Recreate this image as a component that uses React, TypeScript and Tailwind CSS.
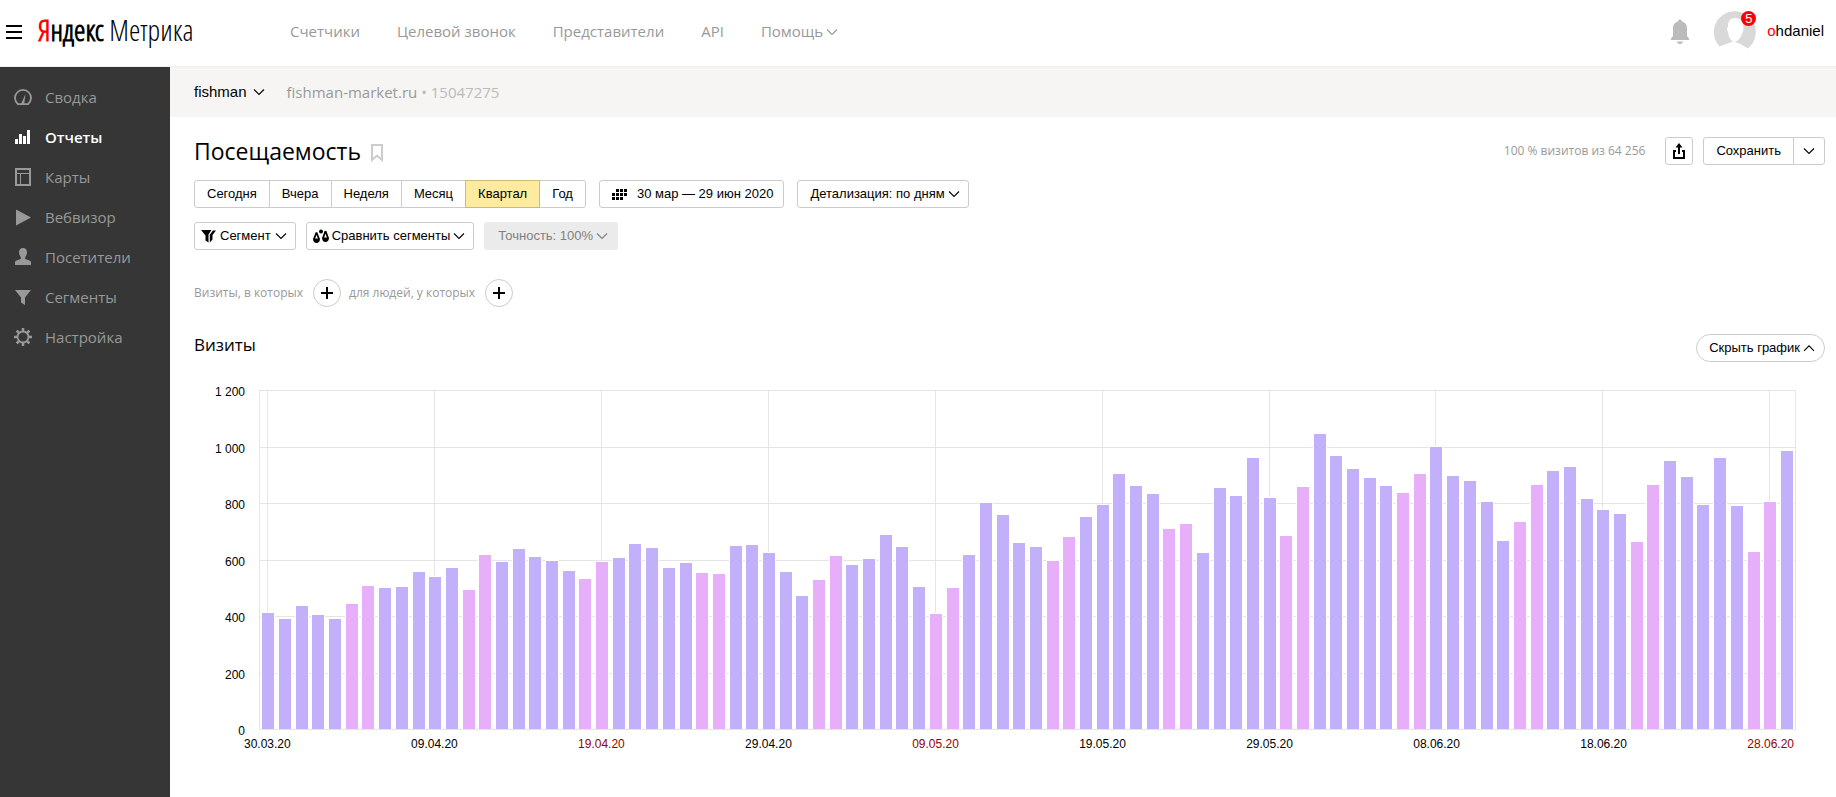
import type { ReactNode } from 'react'
import clsx from 'clsx'
import { twMerge } from 'tailwind-merge'

const menu = ['Счетчики', 'Целевой звонок', 'Представители', 'API']

const periods = ['Сегодня', 'Вчера', 'Неделя', 'Месяц', 'Квартал', 'Год']

// Visits per day, starting on Monday 30.03.20
const visits = [
  413, 392, 437, 406, 389, 445, 509, 501, 505, 559, 541, 573, 495, 619, 594, 640,
  612, 598, 562, 534, 594, 608, 658, 644, 573, 590, 555, 551, 650, 653, 625, 557,
  472, 529, 614, 582, 603, 689, 646, 504, 409, 501, 618, 802, 759, 660, 646, 596,
  681, 752, 795, 905, 862, 834, 710, 727, 625, 855, 827, 961, 820, 685, 859, 1046,
  968, 922, 890, 862, 837, 905, 1000, 898, 880, 805, 667, 735, 866, 915, 929, 816,
  777, 763, 664, 866, 951, 894, 795, 961, 791, 628, 805, 986,
]

const maxVisits = 1200

const yLabels = ['1 200', '1 000', '800', '600', '400', '200', '0']

const xLabels = [
  '30.03.20', '09.04.20', '19.04.20', '29.04.20', '09.05.20',
  '19.05.20', '29.05.20', '08.06.20', '18.06.20', '28.06.20',
]

const isWeekend = (i: number) => i % 7 > 4

function Chevron({ up = false }: { up?: boolean }) {
  return (
    <svg width="12" height="8" viewBox="0 0 12 8" className="shrink-0" fill="none" stroke="currentColor" strokeWidth="1.1">
      <path d={up ? 'M1 6.8 6 1.8l5 5' : 'M1 1.5l5 5 5-5'} />
    </svg>
  )
}

function Button({ className, children }: { className?: string; children: ReactNode }) {
  return (
    <button
      type="button"
      className={twMerge(
        'flex h-7 items-center whitespace-nowrap rounded-[3px] border border-[#ccc] bg-white text-[13px] text-black',
        className,
      )}
    >
      {children}
    </button>
  )
}

function PlusButton({ label }: { label: string }) {
  return (
    <button
      type="button"
      aria-label={label}
      className="flex size-7 items-center justify-center rounded-full border border-[#ccc]"
    >
      <svg width="12" height="12" viewBox="0 0 12 12" stroke="#000" strokeWidth="2">
        <path d="M6 0v12M0 6h12" />
      </svg>
    </button>
  )
}

const sidebar: { title: string; icon: ReactNode }[] = [
  {
    title: 'Сводка',
    icon: (
      <>
        <path d="M4 16.200A8 8 0 1 1 14 16.200Z" fill="none" stroke="currentColor" strokeWidth="1.800" />
        <path d="M11.500 6 10.200 16H7Z" fill="currentColor" />
      </>
    ),
  },
  {
    title: 'Отчеты',
    icon: <path d="M1 11h3v5H1zM5 6h3v10H5zM9 8h3v8H9zM13 2h3v14h-3z" fill="currentColor" />,
  },
  {
    title: 'Карты',
    icon: (
      <>
        <path d="M2 1h14v16H2z" fill="none" stroke="currentColor" strokeWidth="2" />
        <path d="M2 5.500h14M6.500 5.500V17" fill="none" stroke="currentColor" />
      </>
    ),
  },
  { title: 'Вебвизор', icon: <path d="M2 1.500 17 9.500 2 17.500Z" fill="currentColor" /> },
  {
    title: 'Посетители',
    icon: (
      <path
        d="M9 0c2.600 0 4 1.800 4 4.300 0 1.800-.8 3.600-1.800 4.600v2l4.300 1.600c1 .4 1.500 1.100 1.500 2.200V17H1v-2.300c0-1.100.5-1.800 1.500-2.200l4.300-1.600v-2C5.800 7.900 5 6.100 5 4.300 5 1.800 6.400 0 9 0Z"
        fill="currentColor"
      />
    ),
  },
  { title: 'Сегменты', icon: <path d="M1 2h16l-6 7.500V17l-4-2.500V9.500Z" fill="currentColor" /> },
  {
    title: 'Настройка',
    icon: (
      <>
        <circle cx="9" cy="9" r="5.500" fill="none" stroke="currentColor" strokeWidth="1.800" />
        <path
          d="M9 0v3.500M9 14.500V18M0 9h3.500M14.500 9H18M2.640 2.640l2.400 2.400M12.960 12.960l2.400 2.400M2.640 15.360l2.400-2.400M12.960 5.040l2.400-2.400"
          stroke="currentColor"
          strokeWidth="2.600"
        />
      </>
    ),
  },
]

function Header() {
  return (
    <header className="flex h-[67px] shrink-0 items-center justify-between border-b border-[#eeedf0] pr-3 pb-[3px] pl-1.5">
      <div className="flex items-center">
        <button type="button" aria-label="Меню">
          <svg width="16" height="14" viewBox="0 0 16 14" fill="#000">
            <path d="M0 0h16v2H0zM0 6h16v2H0zM0 12h16v2H0z" />
          </svg>
        </button>
        <a
          href="#"
          className="ml-4 w-[200px] whitespace-nowrap pb-1 font-['Open_Sans_Condensed_Light','Open_Sans_Condensed',sans-serif] text-[29px] leading-9"
        >
          <span className="font-bold"><span className="text-[#f00]">Я</span>ндекс</span>{' '}
          <span className="font-light">Метрика</span>
        </a>
        <nav className="ml-[52px] flex items-center gap-[37px] text-[15px] text-[#999]">
          {menu.map((item) => (
            <a key={item} href="#" className="whitespace-nowrap">{item}</a>
          ))}
          <button type="button" className="flex items-center gap-[3px]">
            Помощь
            <Chevron />
          </button>
        </nav>
      </div>

      <div className="flex items-center">
        <button type="button" aria-label="Уведомления" className="mr-6 text-[#bbb]">
          <svg width="20" height="26" viewBox="0 0 20 26" fill="currentColor">
            <path d="M8 2.500a2 2 0 0 1 4 0c3.500.8 5 3.500 5 7V17l2 2.500V21H1v-1.500L3 17V9.500c0-3.500 1.500-6.200 5-7ZM7 22.500h6c-.3 1.800-1.500 2.500-3 2.500s-2.700-.7-3-2.500Z" />
          </svg>
        </button>
        <a href="#" className="flex items-center gap-[11px] font-['Liberation_Sans',sans-serif] text-[15px] text-black">
          <span className="relative size-[42px]">
            <svg width="42" height="42" viewBox="0 0 42 42">
              <path d="M5.500 35.500A21 21 0 1 1 34 37.500C30 35 26 32.500 22.500 31.500c-1.500-.5-2.500-.8-3-1.500-.8 1-2.500.8-3.500 1.800C12.500 33 9 34 5.500 35.500Z" fill="#d9d9d9" />
              <path d="M21 7c6 0 9 4 8.500 11 0 1.500-.8 3-1.500 5-1 3-3 6-6 7.500-2 .5-4-.5-5-1.500-1.800-2-2.500-5-3-8-1.500-2.500-1.500-4 0-5C14 10 16 7 21 7Z" fill="#fff" />
            </svg>
            <span className="absolute top-0 right-0 size-[15px] rounded-full bg-[#f00] text-center text-[13px] leading-[15px] text-white">5</span>
          </span>
          <span><span className="text-[#f00]">o</span>hdaniel</span>
        </a>
      </div>
    </header>
  )
}

function Sidebar() {
  return (
    <aside className="w-[170px] shrink-0 bg-[#363636] pt-2.5">
      {sidebar.map(({ title, icon }) => (
        <a
          key={title}
          href="#"
          className={clsx(
            'flex h-10 items-center gap-[13px] pl-[14px] text-[15px]',
            title === 'Отчеты' ? 'font-semibold text-white' : 'font-medium text-[#999]',
          )}
        >
          <svg width="18" height="18" viewBox="0 0 18 18">{icon}</svg>
          {title}
        </a>
      ))}
    </aside>
  )
}

function Toolbar() {
  return (
    <>
      <div className="flex h-7 items-center justify-between">
        <div className="flex items-center gap-2.5">
          <h1 className="text-[23px] leading-7 text-black">Посещаемость</h1>
          <button type="button" aria-label="В избранное" className="pt-1">
            <svg width="12" height="18" viewBox="0 0 12 18" fill="none" stroke="#ccc" strokeWidth="2">
              <path d="M1 1h10v14.800l-5-4-5 4Z" />
            </svg>
          </button>
        </div>
        <div className="flex items-center font-['Liberation_Sans',sans-serif]">
          <span className="mr-5 font-['Open_Sans',sans-serif] text-[12px] text-[#999]">100 % визитов из 64 256</span>
          <Button className="mr-2.5 w-7 justify-center">
            <svg width="12" height="16" viewBox="0 0 12 16" aria-label="Экспорт">
              <path d="M3 8H1v7h10V8H9" fill="none" stroke="#000" strokeWidth="2" />
              <path d="M6 0l3.500 4.500H7V11H5V4.500H2.500Z" />
            </svg>
          </Button>
          <Button className="rounded-r-none px-3">Сохранить</Button>
          <Button className="-ml-px w-8 justify-center rounded-l-none"><Chevron /></Button>
        </div>
      </div>

      <div className="mt-[15px] flex items-center gap-[13px] font-['Liberation_Sans',sans-serif]">
        <div className="flex">
          {periods.map((period, i) => (
            <Button
              key={period}
              className={clsx(
                'px-3',
                i > 0 && '-ml-px rounded-l-none',
                i < periods.length - 1 && 'rounded-r-none',
                period === 'Квартал' && 'z-10 border-[#ccba7a] bg-[#ffeba0]',
              )}
            >
              {period}
            </Button>
          ))}
        </div>
        <Button className="gap-2.5 pr-2.5 pl-3">
          <svg width="15" height="11" viewBox="0 0 15 11">
            <path d="M4 0h3v3H4zM8 0h3v3H8zM12 0h3v3h-3zM0 4h3v3H0zM4 4h3v3H4zM8 4h3v3H8zM12 4h3v3h-3zM0 8h3v3H0zM4 8h3v3H4zM8 8h3v3H8z" />
          </svg>
          30 мар — 29 июн 2020
        </Button>
        <Button className="gap-[3px] pr-2 pl-3">
          Детализация: по дням
          <Chevron />
        </Button>
      </div>

      <div className="mt-3.5 flex items-center gap-2.5 font-['Liberation_Sans',sans-serif]">
        <Button className="gap-1 pr-2 pl-1.5">
          <svg width="15" height="13" viewBox="0 0 15 13">
            <path d="M0 0h10.500L7.500 4.500V12.500L4.500 10.500V5.500Z" />
            <path d="M12 .5h3L11.500 5V9.500L8.800 12.500V4.800Z" />
          </svg>
          Сегмент
          <Chevron />
        </Button>
        <Button className="gap-[3px] pr-2 pl-1.5">
          <svg width="16" height="14" viewBox="0 0 16 14">
            <circle cx="8" cy="2.500" r="2" />
            <path d="M3.500 3.500 6 10M3.500 3.500 1 10M12.500 2 15 9M12.500 2 10 9" stroke="#000" strokeWidth="1.800" />
            <path d="M0 9.500h7c0 3-1.500 4.500-3.500 4.500S0 12.500 0 9.500ZM9 8.500h7c0 3-1.500 4.500-3.500 4.500S9 11.500 9 8.500Z" />
          </svg>
          Сравнить сегменты
          <Chevron />
        </Button>
        <button
          type="button"
          disabled
          className="flex h-7 items-center gap-[3px] rounded-[3px] bg-[#ebebeb] pr-2.5 pl-3.5 text-[13px] text-[#808080]"
        >
          Точность: 100%
          <Chevron />
        </button>
      </div>

      <div className="mt-[29px] flex items-center text-[12px] text-[#999]">
        <span className="mr-2.5">Визиты, в которых</span>
        <PlusButton label="Добавить условие для визитов" />
        <span className="mr-2.5 ml-2">для людей, у которых</span>
        <PlusButton label="Добавить условие для людей" />
      </div>
    </>
  )
}

function Chart() {
  return (
    <section className="mt-[27px]">
      <div className="flex h-7 items-start justify-between">
        <h2 className="text-[17px] leading-[22px] text-black">Визиты</h2>
        <Button className="gap-[3px] rounded-[14px] pr-[9px] pl-3 font-['Liberation_Sans',sans-serif]">
          Скрыть график
          <Chevron up />
        </Button>
      </div>

      <div className="mt-7 mr-[29px] flex font-['Liberation_Sans',sans-serif] text-[12px] leading-4 text-black">
        <div className="-mt-1.5 flex h-[355px] w-[65px] shrink-0 flex-col justify-between pr-3.5 text-right">
          {yLabels.map((label) => (
            <span key={label}>{label}</span>
          ))}
        </div>
        <div className="min-w-0 grow">
          <div className="relative h-[340px] border border-[#e5e5e5]">
            <div className="absolute inset-0 flex flex-col">
              {yLabels.slice(1).map((label, i) => (
                <div key={label} className={clsx('grow border-[#e5e5e5]', i < 5 && 'border-b')} />
              ))}
            </div>
            <div className="relative flex h-full">
              {visits.map((value, i) => (
                <div key={i} className="relative flex h-full min-w-0 flex-1 items-end justify-center">
                  {i % 10 === 0 && <div className="absolute inset-y-0 left-1/2 -ml-px w-px bg-[#e5e5e5]" />}
                  <div
                    className={clsx(
                      'relative box-content w-full max-w-3 border border-b-0 border-white',
                      isWeekend(i) ? 'bg-[#e7affa]' : 'bg-[#c2b0fa]',
                    )}
                    style={{ height: `${(value / maxVisits) * 100}%` }}
                  />
                </div>
              ))}
            </div>
          </div>
          <div className="mt-1.5 flex">
            {visits.map((_, i) => (
              <div key={i} className="flex min-w-0 flex-1 justify-center whitespace-nowrap">
                {i % 10 === 0 && (
                  <span className={isWeekend(i) ? 'text-[#900]' : undefined}>{xLabels[i / 10]}</span>
                )}
              </div>
            ))}
          </div>
        </div>
      </div>
    </section>
  )
}

export default function App() {
  return (
    <div className="flex min-h-screen flex-col bg-white font-['Open_Sans',sans-serif]">
      <Header />
      <div className="flex grow">
        <Sidebar />
        <main className="min-w-0 grow">
          <div className="flex h-[50px] items-center bg-[#f6f5f3] px-6 text-[15px] text-[#999]">
            <button type="button" className="mr-[22px] flex items-center gap-1.5 font-['Liberation_Sans',sans-serif] text-black">
              fishman
              <Chevron />
            </button>
            <a href="#">fishman-market.ru</a>
            <span className="ml-1 text-[#bbb]">• 15047275</span>
          </div>
          <div className="pt-5 pr-[11px] pb-10 pl-6">
            <Toolbar />
            <Chart />
          </div>
        </main>
      </div>
    </div>
  )
}
